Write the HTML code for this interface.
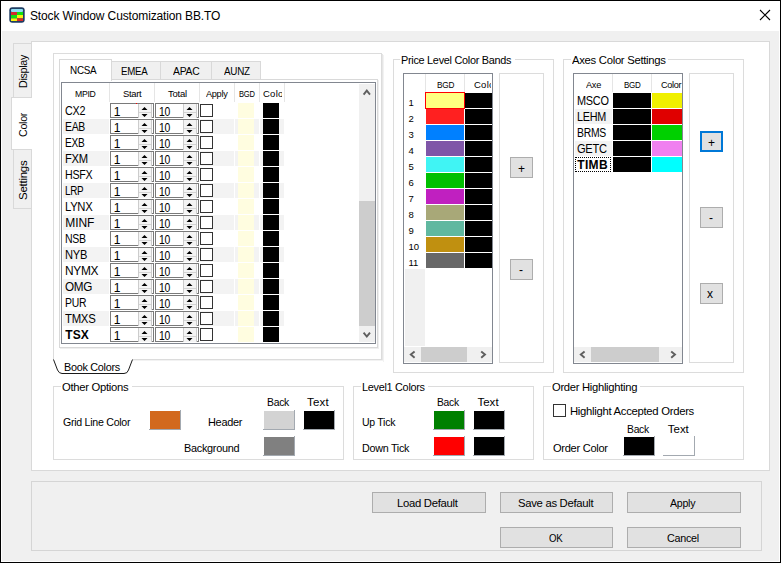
<!DOCTYPE html>
<html><head><meta charset="utf-8"><style>
html,body{margin:0;padding:0;width:781px;height:563px;overflow:hidden;background:#000}
body>div,body>svg{position:absolute}
body{position:relative;font-family:"Liberation Sans", sans-serif}
</style></head><body>
<div style="left:0px;top:0px;width:781px;height:563px;background:#000"></div>
<div style="left:1px;top:1px;width:779px;height:561px;background:#fff"></div>
<div style="left:2px;top:31px;width:777px;height:530px;background:#f0f0f0"></div>
<svg style="left:9px;top:7px" width="16" height="16" viewBox="0 0 16 16">
<rect x="0.3" y="0.3" width="15.4" height="15.4" rx="3" fill="#1f3d63"/>
<rect x="2" y="2" width="12" height="3" rx="1" fill="#8edcf2"/>
<rect x="2" y="5" width="6" height="3" fill="#d42a2a"/><rect x="8" y="5" width="6" height="3" fill="#10e010"/>
<rect x="2" y="8" width="6" height="3.4" fill="#10e010"/><rect x="8" y="8" width="6" height="3.4" fill="#f8f010"/>
<rect x="2" y="11.4" width="6" height="2.6" fill="#f8f010"/><rect x="8" y="11.4" width="6" height="2.6" fill="#d42a2a"/>
</svg>
<div style="font-size:12px;font-weight:400;color:#000;letter-spacing:-0.135px;line-height:14px;white-space:nowrap;left:30.00px;top:9px;">Stock Window Customization BB.TO</div>
<svg style="left:759px;top:9px" width="12" height="12" viewBox="0 0 12 12"><path d="M1 1L11 11M11 1L1 11" stroke="#000" stroke-width="1.1"/></svg>
<div style="left:31px;top:41px;width:739px;height:430px;background:#d9d9d9"></div>
<div style="left:32px;top:42px;width:737px;height:428px;background:#fff"></div>
<div style="left:13px;top:43px;width:18px;height:55px;background:#d9d9d9"></div>
<div style="left:14px;top:44px;width:17px;height:53px;background:#f0f0f0"></div>
<div style="left:13px;top:149px;width:18px;height:60px;background:#d9d9d9"></div>
<div style="left:14px;top:150px;width:17px;height:58px;background:#f0f0f0"></div>
<div style="left:11px;top:97px;width:21px;height:53px;background:#d9d9d9"></div>
<div style="left:12px;top:98px;width:20px;height:51px;background:#fff"></div>
<div style="font-size:11.5px;font-weight:400;color:#000;letter-spacing:-0.300px;line-height:12px;white-space:nowrap;left:17px;top:88px;transform:rotate(-90deg) scaleX(0.927);transform-origin:0 0;">Display</div>
<div style="font-size:11.5px;font-weight:400;color:#000;letter-spacing:-0.300px;line-height:12px;white-space:nowrap;left:17px;top:136.5px;transform:rotate(-90deg) scaleX(0.926);transform-origin:0 0;">Color</div>
<div style="font-size:11.5px;font-weight:400;color:#000;letter-spacing:-0.258px;line-height:12px;white-space:nowrap;left:17px;top:200px;transform:rotate(-90deg) scaleX(1.000);transform-origin:0 0;">Settings</div>
<div style="left:53px;top:53px;width:329px;height:1px;background:#dcdcdc"></div>
<div style="left:53px;top:359px;width:329px;height:1px;background:#dcdcdc"></div>
<div style="left:53px;top:53px;width:1px;height:307px;background:#dcdcdc"></div>
<div style="left:381px;top:53px;width:1px;height:307px;background:#dcdcdc"></div>
<div style="left:382px;top:54px;width:1px;height:307px;background:#e6e6e6"></div>
<div style="left:383px;top:55px;width:1px;height:307px;background:#f2f2f2"></div>
<div style="left:54px;top:360px;width:329px;height:1px;background:#f2f2f2"></div>
<div style="left:111px;top:61px;width:50px;height:19px;background:#d9d9d9"></div>
<div style="left:112px;top:62px;width:48px;height:18px;background:#f0f0f0"></div>
<div style="left:160px;top:61px;width:52px;height:19px;background:#d9d9d9"></div>
<div style="left:161px;top:62px;width:50px;height:18px;background:#f0f0f0"></div>
<div style="left:211px;top:61px;width:50px;height:19px;background:#d9d9d9"></div>
<div style="left:212px;top:62px;width:48px;height:18px;background:#f0f0f0"></div>
<div style="left:59px;top:79px;width:319px;height:1px;background:#d9d9d9"></div>
<div style="left:59px;top:347px;width:319px;height:1px;background:#d9d9d9"></div>
<div style="left:59px;top:79px;width:1px;height:269px;background:#d9d9d9"></div>
<div style="left:377px;top:79px;width:1px;height:269px;background:#d9d9d9"></div>
<div style="left:378px;top:80px;width:1px;height:269px;background:#efefef"></div>
<div style="left:60px;top:348px;width:319px;height:1px;background:#efefef"></div>
<div style="left:59px;top:59px;width:53px;height:22px;background:#d9d9d9"></div>
<div style="left:60px;top:60px;width:51px;height:21px;background:#fff"></div>
<div style="font-size:11.5px;font-weight:400;color:#000;letter-spacing:-0.300px;line-height:12px;white-space:nowrap;left:70.00px;top:64px;transform:scaleX(0.860);transform-origin:0 0;">NCSA</div>
<div style="font-size:11.5px;font-weight:400;color:#000;letter-spacing:-0.300px;line-height:12px;white-space:nowrap;left:121.00px;top:65px;transform:scaleX(0.843);transform-origin:0 0;">EMEA</div>
<div style="font-size:11.5px;font-weight:400;color:#000;letter-spacing:-0.300px;line-height:12px;white-space:nowrap;left:173.00px;top:65px;transform:scaleX(0.902);transform-origin:0 0;">APAC</div>
<div style="font-size:11.5px;font-weight:400;color:#000;letter-spacing:-0.300px;line-height:12px;white-space:nowrap;left:224.00px;top:65px;transform:scaleX(0.856);transform-origin:0 0;">AUNZ</div>
<div style="left:61px;top:82px;width:315px;height:1px;background:#828790"></div>
<div style="left:61px;top:343px;width:315px;height:1px;background:#828790"></div>
<div style="left:61px;top:82px;width:1px;height:262px;background:#828790"></div>
<div style="left:375px;top:82px;width:1px;height:262px;background:#828790"></div>
<div style="left:109px;top:83px;width:1px;height:19px;background:#e5e5e5"></div>
<div style="left:154px;top:83px;width:1px;height:19px;background:#e5e5e5"></div>
<div style="left:199px;top:83px;width:1px;height:19px;background:#e5e5e5"></div>
<div style="left:234px;top:83px;width:1px;height:19px;background:#e5e5e5"></div>
<div style="left:259px;top:83px;width:1px;height:19px;background:#e5e5e5"></div>
<div style="left:284px;top:83px;width:1px;height:19px;background:#e5e5e5"></div>
<div style="font-size:9.5px;font-weight:400;color:#000;letter-spacing:-0.300px;line-height:11px;white-space:nowrap;left:75.00px;top:88px;transform:scaleX(0.913);transform-origin:0 0;">MPID</div>
<div style="font-size:9.5px;font-weight:400;color:#000;letter-spacing:-0.300px;line-height:11px;white-space:nowrap;left:123.00px;top:88px;transform:scaleX(0.988);transform-origin:0 0;">Start</div>
<div style="font-size:9.5px;font-weight:400;color:#000;letter-spacing:-0.239px;line-height:11px;white-space:nowrap;left:168.00px;top:88px;">Total</div>
<div style="font-size:9.5px;font-weight:400;color:#000;letter-spacing:-0.300px;line-height:11px;white-space:nowrap;left:206.00px;top:88px;transform:scaleX(0.964);transform-origin:0 0;">Apply</div>
<div style="font-size:9.5px;font-weight:400;color:#000;letter-spacing:-0.300px;line-height:11px;white-space:nowrap;left:239.00px;top:88px;transform:scaleX(0.795);transform-origin:0 0;">BGD</div>
<div style="font-size:9.5px;font-weight:400;color:#000;letter-spacing:0.248px;line-height:11px;white-space:nowrap;left:263.00px;top:88px;width:19.00px;overflow:hidden;">Colo</div>
<div style="font-size:12px;font-weight:400;color:#000;letter-spacing:-0.300px;line-height:14px;white-space:nowrap;left:65.30px;top:104px;transform:scaleX(0.897);transform-origin:0 0;">CX2</div>
<div style="left:110px;top:103px;width:44px;height:1px;background:#7a7a7a"></div>
<div style="left:110px;top:117px;width:44px;height:1px;background:#7a7a7a"></div>
<div style="left:110px;top:103px;width:1px;height:15px;background:#7a7a7a"></div>
<div style="left:153px;top:103px;width:1px;height:15px;background:#7a7a7a"></div>
<div style="left:111px;top:104px;width:42px;height:13px;background:#fff"></div>
<div style="left:138px;top:104px;width:14px;height:14px;background:#f4f4f4"></div>
<div style="left:138px;top:104px;width:1px;height:14px;background:#cccccc"></div>
<div style="left:151px;top:104px;width:1px;height:14px;background:#cccccc"></div>
<div style="left:139px;top:112px;width:12px;height:1px;background:#d4d4d4"></div>
<svg style="left:138px;top:103px" width="14" height="15" viewBox="0 0 14 15"><path d="M3.5 7L6.5 4L9.5 7Z M3.5 11H9.5L6.5 14Z" fill="#000"/></svg>
<div style="font-size:12px;font-weight:400;color:#000;letter-spacing:0.000px;line-height:14px;white-space:nowrap;left:113.70px;top:105px;">1</div>
<div style="left:155px;top:103px;width:44px;height:1px;background:#7a7a7a"></div>
<div style="left:155px;top:117px;width:44px;height:1px;background:#7a7a7a"></div>
<div style="left:155px;top:103px;width:1px;height:15px;background:#7a7a7a"></div>
<div style="left:198px;top:103px;width:1px;height:15px;background:#7a7a7a"></div>
<div style="left:156px;top:104px;width:42px;height:13px;background:#fff"></div>
<div style="left:183px;top:104px;width:14px;height:14px;background:#f4f4f4"></div>
<div style="left:183px;top:104px;width:1px;height:14px;background:#cccccc"></div>
<div style="left:196px;top:104px;width:1px;height:14px;background:#cccccc"></div>
<div style="left:184px;top:112px;width:12px;height:1px;background:#d4d4d4"></div>
<svg style="left:183px;top:103px" width="14" height="15" viewBox="0 0 14 15"><path d="M3.5 7L6.5 4L9.5 7Z M3.5 11H9.5L6.5 14Z" fill="#000"/></svg>
<div style="font-size:12px;font-weight:400;color:#000;letter-spacing:-0.300px;line-height:14px;white-space:nowrap;left:158.70px;top:105px;transform:scaleX(0.867);transform-origin:0 0;">10</div>
<div style="left:200px;top:104px;width:13px;height:1px;background:#333"></div>
<div style="left:200px;top:116px;width:13px;height:1px;background:#333"></div>
<div style="left:200px;top:104px;width:1px;height:13px;background:#333"></div>
<div style="left:212px;top:104px;width:1px;height:13px;background:#333"></div>
<div style="left:201px;top:105px;width:11px;height:11px;background:#fff"></div>
<div style="left:238px;top:103px;width:16px;height:15px;background:#fffde0"></div>
<div style="left:263px;top:103px;width:16px;height:15px;background:#000"></div>
<div style="left:63px;top:119px;width:46px;height:15px;background:#f3f3f3"></div>
<div style="left:110px;top:119px;width:44px;height:15px;background:#f3f3f3"></div>
<div style="left:155px;top:119px;width:44px;height:15px;background:#f3f3f3"></div>
<div style="left:200px;top:119px;width:34px;height:15px;background:#f3f3f3"></div>
<div style="left:235px;top:119px;width:24px;height:15px;background:#f3f3f3"></div>
<div style="left:260px;top:119px;width:24px;height:15px;background:#f3f3f3"></div>
<div style="font-size:12px;font-weight:400;color:#000;letter-spacing:-0.300px;line-height:14px;white-space:nowrap;left:65.30px;top:120px;transform:scaleX(0.867);transform-origin:0 0;">EAB</div>
<div style="left:110px;top:119px;width:44px;height:1px;background:#7a7a7a"></div>
<div style="left:110px;top:133px;width:44px;height:1px;background:#7a7a7a"></div>
<div style="left:110px;top:119px;width:1px;height:15px;background:#7a7a7a"></div>
<div style="left:153px;top:119px;width:1px;height:15px;background:#7a7a7a"></div>
<div style="left:111px;top:120px;width:42px;height:13px;background:#fff"></div>
<div style="left:138px;top:120px;width:14px;height:14px;background:#f4f4f4"></div>
<div style="left:138px;top:120px;width:1px;height:14px;background:#cccccc"></div>
<div style="left:151px;top:120px;width:1px;height:14px;background:#cccccc"></div>
<div style="left:139px;top:128px;width:12px;height:1px;background:#d4d4d4"></div>
<svg style="left:138px;top:119px" width="14" height="15" viewBox="0 0 14 15"><path d="M3.5 7L6.5 4L9.5 7Z M3.5 11H9.5L6.5 14Z" fill="#000"/></svg>
<div style="font-size:12px;font-weight:400;color:#000;letter-spacing:0.000px;line-height:14px;white-space:nowrap;left:113.70px;top:121px;">1</div>
<div style="left:155px;top:119px;width:44px;height:1px;background:#7a7a7a"></div>
<div style="left:155px;top:133px;width:44px;height:1px;background:#7a7a7a"></div>
<div style="left:155px;top:119px;width:1px;height:15px;background:#7a7a7a"></div>
<div style="left:198px;top:119px;width:1px;height:15px;background:#7a7a7a"></div>
<div style="left:156px;top:120px;width:42px;height:13px;background:#fff"></div>
<div style="left:183px;top:120px;width:14px;height:14px;background:#f4f4f4"></div>
<div style="left:183px;top:120px;width:1px;height:14px;background:#cccccc"></div>
<div style="left:196px;top:120px;width:1px;height:14px;background:#cccccc"></div>
<div style="left:184px;top:128px;width:12px;height:1px;background:#d4d4d4"></div>
<svg style="left:183px;top:119px" width="14" height="15" viewBox="0 0 14 15"><path d="M3.5 7L6.5 4L9.5 7Z M3.5 11H9.5L6.5 14Z" fill="#000"/></svg>
<div style="font-size:12px;font-weight:400;color:#000;letter-spacing:-0.300px;line-height:14px;white-space:nowrap;left:158.70px;top:121px;transform:scaleX(0.867);transform-origin:0 0;">10</div>
<div style="left:200px;top:120px;width:13px;height:1px;background:#333"></div>
<div style="left:200px;top:132px;width:13px;height:1px;background:#333"></div>
<div style="left:200px;top:120px;width:1px;height:13px;background:#333"></div>
<div style="left:212px;top:120px;width:1px;height:13px;background:#333"></div>
<div style="left:201px;top:121px;width:11px;height:11px;background:#fff"></div>
<div style="left:238px;top:119px;width:16px;height:15px;background:#fffde0"></div>
<div style="left:263px;top:119px;width:16px;height:15px;background:#000"></div>
<div style="font-size:12px;font-weight:400;color:#000;letter-spacing:-0.300px;line-height:14px;white-space:nowrap;left:65.30px;top:136px;transform:scaleX(0.842);transform-origin:0 0;">EXB</div>
<div style="left:110px;top:135px;width:44px;height:1px;background:#7a7a7a"></div>
<div style="left:110px;top:149px;width:44px;height:1px;background:#7a7a7a"></div>
<div style="left:110px;top:135px;width:1px;height:15px;background:#7a7a7a"></div>
<div style="left:153px;top:135px;width:1px;height:15px;background:#7a7a7a"></div>
<div style="left:111px;top:136px;width:42px;height:13px;background:#fff"></div>
<div style="left:138px;top:136px;width:14px;height:14px;background:#f4f4f4"></div>
<div style="left:138px;top:136px;width:1px;height:14px;background:#cccccc"></div>
<div style="left:151px;top:136px;width:1px;height:14px;background:#cccccc"></div>
<div style="left:139px;top:144px;width:12px;height:1px;background:#d4d4d4"></div>
<svg style="left:138px;top:135px" width="14" height="15" viewBox="0 0 14 15"><path d="M3.5 7L6.5 4L9.5 7Z M3.5 11H9.5L6.5 14Z" fill="#000"/></svg>
<div style="font-size:12px;font-weight:400;color:#000;letter-spacing:0.000px;line-height:14px;white-space:nowrap;left:113.70px;top:137px;">1</div>
<div style="left:155px;top:135px;width:44px;height:1px;background:#7a7a7a"></div>
<div style="left:155px;top:149px;width:44px;height:1px;background:#7a7a7a"></div>
<div style="left:155px;top:135px;width:1px;height:15px;background:#7a7a7a"></div>
<div style="left:198px;top:135px;width:1px;height:15px;background:#7a7a7a"></div>
<div style="left:156px;top:136px;width:42px;height:13px;background:#fff"></div>
<div style="left:183px;top:136px;width:14px;height:14px;background:#f4f4f4"></div>
<div style="left:183px;top:136px;width:1px;height:14px;background:#cccccc"></div>
<div style="left:196px;top:136px;width:1px;height:14px;background:#cccccc"></div>
<div style="left:184px;top:144px;width:12px;height:1px;background:#d4d4d4"></div>
<svg style="left:183px;top:135px" width="14" height="15" viewBox="0 0 14 15"><path d="M3.5 7L6.5 4L9.5 7Z M3.5 11H9.5L6.5 14Z" fill="#000"/></svg>
<div style="font-size:12px;font-weight:400;color:#000;letter-spacing:-0.300px;line-height:14px;white-space:nowrap;left:158.70px;top:137px;transform:scaleX(0.867);transform-origin:0 0;">10</div>
<div style="left:200px;top:136px;width:13px;height:1px;background:#333"></div>
<div style="left:200px;top:148px;width:13px;height:1px;background:#333"></div>
<div style="left:200px;top:136px;width:1px;height:13px;background:#333"></div>
<div style="left:212px;top:136px;width:1px;height:13px;background:#333"></div>
<div style="left:201px;top:137px;width:11px;height:11px;background:#fff"></div>
<div style="left:238px;top:135px;width:16px;height:15px;background:#fffde0"></div>
<div style="left:263px;top:135px;width:16px;height:15px;background:#000"></div>
<div style="left:63px;top:151px;width:46px;height:15px;background:#f3f3f3"></div>
<div style="left:110px;top:151px;width:44px;height:15px;background:#f3f3f3"></div>
<div style="left:155px;top:151px;width:44px;height:15px;background:#f3f3f3"></div>
<div style="left:200px;top:151px;width:34px;height:15px;background:#f3f3f3"></div>
<div style="left:235px;top:151px;width:24px;height:15px;background:#f3f3f3"></div>
<div style="left:260px;top:151px;width:24px;height:15px;background:#f3f3f3"></div>
<div style="font-size:12px;font-weight:400;color:#000;letter-spacing:-0.300px;line-height:14px;white-space:nowrap;left:65.30px;top:152px;transform:scaleX(0.934);transform-origin:0 0;">FXM</div>
<div style="left:110px;top:151px;width:44px;height:1px;background:#7a7a7a"></div>
<div style="left:110px;top:165px;width:44px;height:1px;background:#7a7a7a"></div>
<div style="left:110px;top:151px;width:1px;height:15px;background:#7a7a7a"></div>
<div style="left:153px;top:151px;width:1px;height:15px;background:#7a7a7a"></div>
<div style="left:111px;top:152px;width:42px;height:13px;background:#fff"></div>
<div style="left:138px;top:152px;width:14px;height:14px;background:#f4f4f4"></div>
<div style="left:138px;top:152px;width:1px;height:14px;background:#cccccc"></div>
<div style="left:151px;top:152px;width:1px;height:14px;background:#cccccc"></div>
<div style="left:139px;top:160px;width:12px;height:1px;background:#d4d4d4"></div>
<svg style="left:138px;top:151px" width="14" height="15" viewBox="0 0 14 15"><path d="M3.5 7L6.5 4L9.5 7Z M3.5 11H9.5L6.5 14Z" fill="#000"/></svg>
<div style="font-size:12px;font-weight:400;color:#000;letter-spacing:0.000px;line-height:14px;white-space:nowrap;left:113.70px;top:153px;">1</div>
<div style="left:155px;top:151px;width:44px;height:1px;background:#7a7a7a"></div>
<div style="left:155px;top:165px;width:44px;height:1px;background:#7a7a7a"></div>
<div style="left:155px;top:151px;width:1px;height:15px;background:#7a7a7a"></div>
<div style="left:198px;top:151px;width:1px;height:15px;background:#7a7a7a"></div>
<div style="left:156px;top:152px;width:42px;height:13px;background:#fff"></div>
<div style="left:183px;top:152px;width:14px;height:14px;background:#f4f4f4"></div>
<div style="left:183px;top:152px;width:1px;height:14px;background:#cccccc"></div>
<div style="left:196px;top:152px;width:1px;height:14px;background:#cccccc"></div>
<div style="left:184px;top:160px;width:12px;height:1px;background:#d4d4d4"></div>
<svg style="left:183px;top:151px" width="14" height="15" viewBox="0 0 14 15"><path d="M3.5 7L6.5 4L9.5 7Z M3.5 11H9.5L6.5 14Z" fill="#000"/></svg>
<div style="font-size:12px;font-weight:400;color:#000;letter-spacing:-0.300px;line-height:14px;white-space:nowrap;left:158.70px;top:153px;transform:scaleX(0.867);transform-origin:0 0;">10</div>
<div style="left:200px;top:152px;width:13px;height:1px;background:#333"></div>
<div style="left:200px;top:164px;width:13px;height:1px;background:#333"></div>
<div style="left:200px;top:152px;width:1px;height:13px;background:#333"></div>
<div style="left:212px;top:152px;width:1px;height:13px;background:#333"></div>
<div style="left:201px;top:153px;width:11px;height:11px;background:#fff"></div>
<div style="left:238px;top:151px;width:16px;height:15px;background:#fffde0"></div>
<div style="left:263px;top:151px;width:16px;height:15px;background:#000"></div>
<div style="font-size:12px;font-weight:400;color:#000;letter-spacing:-0.300px;line-height:14px;white-space:nowrap;left:65.30px;top:168px;transform:scaleX(0.891);transform-origin:0 0;">HSFX</div>
<div style="left:110px;top:167px;width:44px;height:1px;background:#7a7a7a"></div>
<div style="left:110px;top:181px;width:44px;height:1px;background:#7a7a7a"></div>
<div style="left:110px;top:167px;width:1px;height:15px;background:#7a7a7a"></div>
<div style="left:153px;top:167px;width:1px;height:15px;background:#7a7a7a"></div>
<div style="left:111px;top:168px;width:42px;height:13px;background:#fff"></div>
<div style="left:138px;top:168px;width:14px;height:14px;background:#f4f4f4"></div>
<div style="left:138px;top:168px;width:1px;height:14px;background:#cccccc"></div>
<div style="left:151px;top:168px;width:1px;height:14px;background:#cccccc"></div>
<div style="left:139px;top:176px;width:12px;height:1px;background:#d4d4d4"></div>
<svg style="left:138px;top:167px" width="14" height="15" viewBox="0 0 14 15"><path d="M3.5 7L6.5 4L9.5 7Z M3.5 11H9.5L6.5 14Z" fill="#000"/></svg>
<div style="font-size:12px;font-weight:400;color:#000;letter-spacing:0.000px;line-height:14px;white-space:nowrap;left:113.70px;top:169px;">1</div>
<div style="left:155px;top:167px;width:44px;height:1px;background:#7a7a7a"></div>
<div style="left:155px;top:181px;width:44px;height:1px;background:#7a7a7a"></div>
<div style="left:155px;top:167px;width:1px;height:15px;background:#7a7a7a"></div>
<div style="left:198px;top:167px;width:1px;height:15px;background:#7a7a7a"></div>
<div style="left:156px;top:168px;width:42px;height:13px;background:#fff"></div>
<div style="left:183px;top:168px;width:14px;height:14px;background:#f4f4f4"></div>
<div style="left:183px;top:168px;width:1px;height:14px;background:#cccccc"></div>
<div style="left:196px;top:168px;width:1px;height:14px;background:#cccccc"></div>
<div style="left:184px;top:176px;width:12px;height:1px;background:#d4d4d4"></div>
<svg style="left:183px;top:167px" width="14" height="15" viewBox="0 0 14 15"><path d="M3.5 7L6.5 4L9.5 7Z M3.5 11H9.5L6.5 14Z" fill="#000"/></svg>
<div style="font-size:12px;font-weight:400;color:#000;letter-spacing:-0.300px;line-height:14px;white-space:nowrap;left:158.70px;top:169px;transform:scaleX(0.867);transform-origin:0 0;">10</div>
<div style="left:200px;top:168px;width:13px;height:1px;background:#333"></div>
<div style="left:200px;top:180px;width:13px;height:1px;background:#333"></div>
<div style="left:200px;top:168px;width:1px;height:13px;background:#333"></div>
<div style="left:212px;top:168px;width:1px;height:13px;background:#333"></div>
<div style="left:201px;top:169px;width:11px;height:11px;background:#fff"></div>
<div style="left:238px;top:167px;width:16px;height:15px;background:#fffde0"></div>
<div style="left:263px;top:167px;width:16px;height:15px;background:#000"></div>
<div style="left:63px;top:183px;width:46px;height:15px;background:#f3f3f3"></div>
<div style="left:110px;top:183px;width:44px;height:15px;background:#f3f3f3"></div>
<div style="left:155px;top:183px;width:44px;height:15px;background:#f3f3f3"></div>
<div style="left:200px;top:183px;width:34px;height:15px;background:#f3f3f3"></div>
<div style="left:235px;top:183px;width:24px;height:15px;background:#f3f3f3"></div>
<div style="left:260px;top:183px;width:24px;height:15px;background:#f3f3f3"></div>
<div style="font-size:12px;font-weight:400;color:#000;letter-spacing:-0.300px;line-height:14px;white-space:nowrap;left:65.30px;top:184px;transform:scaleX(0.822);transform-origin:0 0;">LRP</div>
<div style="left:110px;top:183px;width:44px;height:1px;background:#7a7a7a"></div>
<div style="left:110px;top:197px;width:44px;height:1px;background:#7a7a7a"></div>
<div style="left:110px;top:183px;width:1px;height:15px;background:#7a7a7a"></div>
<div style="left:153px;top:183px;width:1px;height:15px;background:#7a7a7a"></div>
<div style="left:111px;top:184px;width:42px;height:13px;background:#fff"></div>
<div style="left:138px;top:184px;width:14px;height:14px;background:#f4f4f4"></div>
<div style="left:138px;top:184px;width:1px;height:14px;background:#cccccc"></div>
<div style="left:151px;top:184px;width:1px;height:14px;background:#cccccc"></div>
<div style="left:139px;top:192px;width:12px;height:1px;background:#d4d4d4"></div>
<svg style="left:138px;top:183px" width="14" height="15" viewBox="0 0 14 15"><path d="M3.5 7L6.5 4L9.5 7Z M3.5 11H9.5L6.5 14Z" fill="#000"/></svg>
<div style="font-size:12px;font-weight:400;color:#000;letter-spacing:0.000px;line-height:14px;white-space:nowrap;left:113.70px;top:185px;">1</div>
<div style="left:155px;top:183px;width:44px;height:1px;background:#7a7a7a"></div>
<div style="left:155px;top:197px;width:44px;height:1px;background:#7a7a7a"></div>
<div style="left:155px;top:183px;width:1px;height:15px;background:#7a7a7a"></div>
<div style="left:198px;top:183px;width:1px;height:15px;background:#7a7a7a"></div>
<div style="left:156px;top:184px;width:42px;height:13px;background:#fff"></div>
<div style="left:183px;top:184px;width:14px;height:14px;background:#f4f4f4"></div>
<div style="left:183px;top:184px;width:1px;height:14px;background:#cccccc"></div>
<div style="left:196px;top:184px;width:1px;height:14px;background:#cccccc"></div>
<div style="left:184px;top:192px;width:12px;height:1px;background:#d4d4d4"></div>
<svg style="left:183px;top:183px" width="14" height="15" viewBox="0 0 14 15"><path d="M3.5 7L6.5 4L9.5 7Z M3.5 11H9.5L6.5 14Z" fill="#000"/></svg>
<div style="font-size:12px;font-weight:400;color:#000;letter-spacing:-0.300px;line-height:14px;white-space:nowrap;left:158.70px;top:185px;transform:scaleX(0.867);transform-origin:0 0;">10</div>
<div style="left:200px;top:184px;width:13px;height:1px;background:#333"></div>
<div style="left:200px;top:196px;width:13px;height:1px;background:#333"></div>
<div style="left:200px;top:184px;width:1px;height:13px;background:#333"></div>
<div style="left:212px;top:184px;width:1px;height:13px;background:#333"></div>
<div style="left:201px;top:185px;width:11px;height:11px;background:#fff"></div>
<div style="left:238px;top:183px;width:16px;height:15px;background:#fffde0"></div>
<div style="left:263px;top:183px;width:16px;height:15px;background:#000"></div>
<div style="font-size:12px;font-weight:400;color:#000;letter-spacing:-0.300px;line-height:14px;white-space:nowrap;left:65.30px;top:200px;transform:scaleX(0.937);transform-origin:0 0;">LYNX</div>
<div style="left:110px;top:199px;width:44px;height:1px;background:#7a7a7a"></div>
<div style="left:110px;top:213px;width:44px;height:1px;background:#7a7a7a"></div>
<div style="left:110px;top:199px;width:1px;height:15px;background:#7a7a7a"></div>
<div style="left:153px;top:199px;width:1px;height:15px;background:#7a7a7a"></div>
<div style="left:111px;top:200px;width:42px;height:13px;background:#fff"></div>
<div style="left:138px;top:200px;width:14px;height:14px;background:#f4f4f4"></div>
<div style="left:138px;top:200px;width:1px;height:14px;background:#cccccc"></div>
<div style="left:151px;top:200px;width:1px;height:14px;background:#cccccc"></div>
<div style="left:139px;top:208px;width:12px;height:1px;background:#d4d4d4"></div>
<svg style="left:138px;top:199px" width="14" height="15" viewBox="0 0 14 15"><path d="M3.5 7L6.5 4L9.5 7Z M3.5 11H9.5L6.5 14Z" fill="#000"/></svg>
<div style="font-size:12px;font-weight:400;color:#000;letter-spacing:0.000px;line-height:14px;white-space:nowrap;left:113.70px;top:201px;">1</div>
<div style="left:155px;top:199px;width:44px;height:1px;background:#7a7a7a"></div>
<div style="left:155px;top:213px;width:44px;height:1px;background:#7a7a7a"></div>
<div style="left:155px;top:199px;width:1px;height:15px;background:#7a7a7a"></div>
<div style="left:198px;top:199px;width:1px;height:15px;background:#7a7a7a"></div>
<div style="left:156px;top:200px;width:42px;height:13px;background:#fff"></div>
<div style="left:183px;top:200px;width:14px;height:14px;background:#f4f4f4"></div>
<div style="left:183px;top:200px;width:1px;height:14px;background:#cccccc"></div>
<div style="left:196px;top:200px;width:1px;height:14px;background:#cccccc"></div>
<div style="left:184px;top:208px;width:12px;height:1px;background:#d4d4d4"></div>
<svg style="left:183px;top:199px" width="14" height="15" viewBox="0 0 14 15"><path d="M3.5 7L6.5 4L9.5 7Z M3.5 11H9.5L6.5 14Z" fill="#000"/></svg>
<div style="font-size:12px;font-weight:400;color:#000;letter-spacing:-0.300px;line-height:14px;white-space:nowrap;left:158.70px;top:201px;transform:scaleX(0.867);transform-origin:0 0;">10</div>
<div style="left:200px;top:200px;width:13px;height:1px;background:#333"></div>
<div style="left:200px;top:212px;width:13px;height:1px;background:#333"></div>
<div style="left:200px;top:200px;width:1px;height:13px;background:#333"></div>
<div style="left:212px;top:200px;width:1px;height:13px;background:#333"></div>
<div style="left:201px;top:201px;width:11px;height:11px;background:#fff"></div>
<div style="left:238px;top:199px;width:16px;height:15px;background:#fffde0"></div>
<div style="left:263px;top:199px;width:16px;height:15px;background:#000"></div>
<div style="left:63px;top:215px;width:46px;height:15px;background:#f3f3f3"></div>
<div style="left:110px;top:215px;width:44px;height:15px;background:#f3f3f3"></div>
<div style="left:155px;top:215px;width:44px;height:15px;background:#f3f3f3"></div>
<div style="left:200px;top:215px;width:34px;height:15px;background:#f3f3f3"></div>
<div style="left:235px;top:215px;width:24px;height:15px;background:#f3f3f3"></div>
<div style="left:260px;top:215px;width:24px;height:15px;background:#f3f3f3"></div>
<div style="font-size:12px;font-weight:400;color:#000;letter-spacing:-0.099px;line-height:14px;white-space:nowrap;left:65.30px;top:216px;">MINF</div>
<div style="left:110px;top:215px;width:44px;height:1px;background:#7a7a7a"></div>
<div style="left:110px;top:229px;width:44px;height:1px;background:#7a7a7a"></div>
<div style="left:110px;top:215px;width:1px;height:15px;background:#7a7a7a"></div>
<div style="left:153px;top:215px;width:1px;height:15px;background:#7a7a7a"></div>
<div style="left:111px;top:216px;width:42px;height:13px;background:#fff"></div>
<div style="left:138px;top:216px;width:14px;height:14px;background:#f4f4f4"></div>
<div style="left:138px;top:216px;width:1px;height:14px;background:#cccccc"></div>
<div style="left:151px;top:216px;width:1px;height:14px;background:#cccccc"></div>
<div style="left:139px;top:224px;width:12px;height:1px;background:#d4d4d4"></div>
<svg style="left:138px;top:215px" width="14" height="15" viewBox="0 0 14 15"><path d="M3.5 7L6.5 4L9.5 7Z M3.5 11H9.5L6.5 14Z" fill="#000"/></svg>
<div style="font-size:12px;font-weight:400;color:#000;letter-spacing:0.000px;line-height:14px;white-space:nowrap;left:113.70px;top:217px;">1</div>
<div style="left:155px;top:215px;width:44px;height:1px;background:#7a7a7a"></div>
<div style="left:155px;top:229px;width:44px;height:1px;background:#7a7a7a"></div>
<div style="left:155px;top:215px;width:1px;height:15px;background:#7a7a7a"></div>
<div style="left:198px;top:215px;width:1px;height:15px;background:#7a7a7a"></div>
<div style="left:156px;top:216px;width:42px;height:13px;background:#fff"></div>
<div style="left:183px;top:216px;width:14px;height:14px;background:#f4f4f4"></div>
<div style="left:183px;top:216px;width:1px;height:14px;background:#cccccc"></div>
<div style="left:196px;top:216px;width:1px;height:14px;background:#cccccc"></div>
<div style="left:184px;top:224px;width:12px;height:1px;background:#d4d4d4"></div>
<svg style="left:183px;top:215px" width="14" height="15" viewBox="0 0 14 15"><path d="M3.5 7L6.5 4L9.5 7Z M3.5 11H9.5L6.5 14Z" fill="#000"/></svg>
<div style="font-size:12px;font-weight:400;color:#000;letter-spacing:-0.300px;line-height:14px;white-space:nowrap;left:158.70px;top:217px;transform:scaleX(0.867);transform-origin:0 0;">10</div>
<div style="left:200px;top:216px;width:13px;height:1px;background:#333"></div>
<div style="left:200px;top:228px;width:13px;height:1px;background:#333"></div>
<div style="left:200px;top:216px;width:1px;height:13px;background:#333"></div>
<div style="left:212px;top:216px;width:1px;height:13px;background:#333"></div>
<div style="left:201px;top:217px;width:11px;height:11px;background:#fff"></div>
<div style="left:238px;top:215px;width:16px;height:15px;background:#fffde0"></div>
<div style="left:263px;top:215px;width:16px;height:15px;background:#000"></div>
<div style="font-size:12px;font-weight:400;color:#000;letter-spacing:-0.300px;line-height:14px;white-space:nowrap;left:65.30px;top:232px;transform:scaleX(0.877);transform-origin:0 0;">NSB</div>
<div style="left:110px;top:231px;width:44px;height:1px;background:#7a7a7a"></div>
<div style="left:110px;top:245px;width:44px;height:1px;background:#7a7a7a"></div>
<div style="left:110px;top:231px;width:1px;height:15px;background:#7a7a7a"></div>
<div style="left:153px;top:231px;width:1px;height:15px;background:#7a7a7a"></div>
<div style="left:111px;top:232px;width:42px;height:13px;background:#fff"></div>
<div style="left:138px;top:232px;width:14px;height:14px;background:#f4f4f4"></div>
<div style="left:138px;top:232px;width:1px;height:14px;background:#cccccc"></div>
<div style="left:151px;top:232px;width:1px;height:14px;background:#cccccc"></div>
<div style="left:139px;top:240px;width:12px;height:1px;background:#d4d4d4"></div>
<svg style="left:138px;top:231px" width="14" height="15" viewBox="0 0 14 15"><path d="M3.5 7L6.5 4L9.5 7Z M3.5 11H9.5L6.5 14Z" fill="#000"/></svg>
<div style="font-size:12px;font-weight:400;color:#000;letter-spacing:0.000px;line-height:14px;white-space:nowrap;left:113.70px;top:233px;">1</div>
<div style="left:155px;top:231px;width:44px;height:1px;background:#7a7a7a"></div>
<div style="left:155px;top:245px;width:44px;height:1px;background:#7a7a7a"></div>
<div style="left:155px;top:231px;width:1px;height:15px;background:#7a7a7a"></div>
<div style="left:198px;top:231px;width:1px;height:15px;background:#7a7a7a"></div>
<div style="left:156px;top:232px;width:42px;height:13px;background:#fff"></div>
<div style="left:183px;top:232px;width:14px;height:14px;background:#f4f4f4"></div>
<div style="left:183px;top:232px;width:1px;height:14px;background:#cccccc"></div>
<div style="left:196px;top:232px;width:1px;height:14px;background:#cccccc"></div>
<div style="left:184px;top:240px;width:12px;height:1px;background:#d4d4d4"></div>
<svg style="left:183px;top:231px" width="14" height="15" viewBox="0 0 14 15"><path d="M3.5 7L6.5 4L9.5 7Z M3.5 11H9.5L6.5 14Z" fill="#000"/></svg>
<div style="font-size:12px;font-weight:400;color:#000;letter-spacing:-0.300px;line-height:14px;white-space:nowrap;left:158.70px;top:233px;transform:scaleX(0.867);transform-origin:0 0;">10</div>
<div style="left:200px;top:232px;width:13px;height:1px;background:#333"></div>
<div style="left:200px;top:244px;width:13px;height:1px;background:#333"></div>
<div style="left:200px;top:232px;width:1px;height:13px;background:#333"></div>
<div style="left:212px;top:232px;width:1px;height:13px;background:#333"></div>
<div style="left:201px;top:233px;width:11px;height:11px;background:#fff"></div>
<div style="left:238px;top:231px;width:16px;height:15px;background:#fffde0"></div>
<div style="left:263px;top:231px;width:16px;height:15px;background:#000"></div>
<div style="left:63px;top:247px;width:46px;height:15px;background:#f3f3f3"></div>
<div style="left:110px;top:247px;width:44px;height:15px;background:#f3f3f3"></div>
<div style="left:155px;top:247px;width:44px;height:15px;background:#f3f3f3"></div>
<div style="left:200px;top:247px;width:34px;height:15px;background:#f3f3f3"></div>
<div style="left:235px;top:247px;width:24px;height:15px;background:#f3f3f3"></div>
<div style="left:260px;top:247px;width:24px;height:15px;background:#f3f3f3"></div>
<div style="font-size:12px;font-weight:400;color:#000;letter-spacing:-0.300px;line-height:14px;white-space:nowrap;left:65.30px;top:248px;transform:scaleX(0.926);transform-origin:0 0;">NYB</div>
<div style="left:110px;top:247px;width:44px;height:1px;background:#7a7a7a"></div>
<div style="left:110px;top:261px;width:44px;height:1px;background:#7a7a7a"></div>
<div style="left:110px;top:247px;width:1px;height:15px;background:#7a7a7a"></div>
<div style="left:153px;top:247px;width:1px;height:15px;background:#7a7a7a"></div>
<div style="left:111px;top:248px;width:42px;height:13px;background:#fff"></div>
<div style="left:138px;top:248px;width:14px;height:14px;background:#f4f4f4"></div>
<div style="left:138px;top:248px;width:1px;height:14px;background:#cccccc"></div>
<div style="left:151px;top:248px;width:1px;height:14px;background:#cccccc"></div>
<div style="left:139px;top:256px;width:12px;height:1px;background:#d4d4d4"></div>
<svg style="left:138px;top:247px" width="14" height="15" viewBox="0 0 14 15"><path d="M3.5 7L6.5 4L9.5 7Z M3.5 11H9.5L6.5 14Z" fill="#000"/></svg>
<div style="font-size:12px;font-weight:400;color:#000;letter-spacing:0.000px;line-height:14px;white-space:nowrap;left:113.70px;top:249px;">1</div>
<div style="left:155px;top:247px;width:44px;height:1px;background:#7a7a7a"></div>
<div style="left:155px;top:261px;width:44px;height:1px;background:#7a7a7a"></div>
<div style="left:155px;top:247px;width:1px;height:15px;background:#7a7a7a"></div>
<div style="left:198px;top:247px;width:1px;height:15px;background:#7a7a7a"></div>
<div style="left:156px;top:248px;width:42px;height:13px;background:#fff"></div>
<div style="left:183px;top:248px;width:14px;height:14px;background:#f4f4f4"></div>
<div style="left:183px;top:248px;width:1px;height:14px;background:#cccccc"></div>
<div style="left:196px;top:248px;width:1px;height:14px;background:#cccccc"></div>
<div style="left:184px;top:256px;width:12px;height:1px;background:#d4d4d4"></div>
<svg style="left:183px;top:247px" width="14" height="15" viewBox="0 0 14 15"><path d="M3.5 7L6.5 4L9.5 7Z M3.5 11H9.5L6.5 14Z" fill="#000"/></svg>
<div style="font-size:12px;font-weight:400;color:#000;letter-spacing:-0.300px;line-height:14px;white-space:nowrap;left:158.70px;top:249px;transform:scaleX(0.867);transform-origin:0 0;">10</div>
<div style="left:200px;top:248px;width:13px;height:1px;background:#333"></div>
<div style="left:200px;top:260px;width:13px;height:1px;background:#333"></div>
<div style="left:200px;top:248px;width:1px;height:13px;background:#333"></div>
<div style="left:212px;top:248px;width:1px;height:13px;background:#333"></div>
<div style="left:201px;top:249px;width:11px;height:11px;background:#fff"></div>
<div style="left:238px;top:247px;width:16px;height:15px;background:#fffde0"></div>
<div style="left:263px;top:247px;width:16px;height:15px;background:#000"></div>
<div style="font-size:12px;font-weight:400;color:#000;letter-spacing:-0.300px;line-height:14px;white-space:nowrap;left:65.30px;top:264px;transform:scaleX(0.992);transform-origin:0 0;">NYMX</div>
<div style="left:110px;top:263px;width:44px;height:1px;background:#7a7a7a"></div>
<div style="left:110px;top:277px;width:44px;height:1px;background:#7a7a7a"></div>
<div style="left:110px;top:263px;width:1px;height:15px;background:#7a7a7a"></div>
<div style="left:153px;top:263px;width:1px;height:15px;background:#7a7a7a"></div>
<div style="left:111px;top:264px;width:42px;height:13px;background:#fff"></div>
<div style="left:138px;top:264px;width:14px;height:14px;background:#f4f4f4"></div>
<div style="left:138px;top:264px;width:1px;height:14px;background:#cccccc"></div>
<div style="left:151px;top:264px;width:1px;height:14px;background:#cccccc"></div>
<div style="left:139px;top:272px;width:12px;height:1px;background:#d4d4d4"></div>
<svg style="left:138px;top:263px" width="14" height="15" viewBox="0 0 14 15"><path d="M3.5 7L6.5 4L9.5 7Z M3.5 11H9.5L6.5 14Z" fill="#000"/></svg>
<div style="font-size:12px;font-weight:400;color:#000;letter-spacing:0.000px;line-height:14px;white-space:nowrap;left:113.70px;top:265px;">1</div>
<div style="left:155px;top:263px;width:44px;height:1px;background:#7a7a7a"></div>
<div style="left:155px;top:277px;width:44px;height:1px;background:#7a7a7a"></div>
<div style="left:155px;top:263px;width:1px;height:15px;background:#7a7a7a"></div>
<div style="left:198px;top:263px;width:1px;height:15px;background:#7a7a7a"></div>
<div style="left:156px;top:264px;width:42px;height:13px;background:#fff"></div>
<div style="left:183px;top:264px;width:14px;height:14px;background:#f4f4f4"></div>
<div style="left:183px;top:264px;width:1px;height:14px;background:#cccccc"></div>
<div style="left:196px;top:264px;width:1px;height:14px;background:#cccccc"></div>
<div style="left:184px;top:272px;width:12px;height:1px;background:#d4d4d4"></div>
<svg style="left:183px;top:263px" width="14" height="15" viewBox="0 0 14 15"><path d="M3.5 7L6.5 4L9.5 7Z M3.5 11H9.5L6.5 14Z" fill="#000"/></svg>
<div style="font-size:12px;font-weight:400;color:#000;letter-spacing:-0.300px;line-height:14px;white-space:nowrap;left:158.70px;top:265px;transform:scaleX(0.867);transform-origin:0 0;">10</div>
<div style="left:200px;top:264px;width:13px;height:1px;background:#333"></div>
<div style="left:200px;top:276px;width:13px;height:1px;background:#333"></div>
<div style="left:200px;top:264px;width:1px;height:13px;background:#333"></div>
<div style="left:212px;top:264px;width:1px;height:13px;background:#333"></div>
<div style="left:201px;top:265px;width:11px;height:11px;background:#fff"></div>
<div style="left:238px;top:263px;width:16px;height:15px;background:#fffde0"></div>
<div style="left:263px;top:263px;width:16px;height:15px;background:#000"></div>
<div style="left:63px;top:279px;width:46px;height:15px;background:#f3f3f3"></div>
<div style="left:110px;top:279px;width:44px;height:15px;background:#f3f3f3"></div>
<div style="left:155px;top:279px;width:44px;height:15px;background:#f3f3f3"></div>
<div style="left:200px;top:279px;width:34px;height:15px;background:#f3f3f3"></div>
<div style="left:235px;top:279px;width:24px;height:15px;background:#f3f3f3"></div>
<div style="left:260px;top:279px;width:24px;height:15px;background:#f3f3f3"></div>
<div style="font-size:12px;font-weight:400;color:#000;letter-spacing:-0.300px;line-height:14px;white-space:nowrap;left:65.30px;top:280px;transform:scaleX(0.977);transform-origin:0 0;">OMG</div>
<div style="left:110px;top:279px;width:44px;height:1px;background:#7a7a7a"></div>
<div style="left:110px;top:293px;width:44px;height:1px;background:#7a7a7a"></div>
<div style="left:110px;top:279px;width:1px;height:15px;background:#7a7a7a"></div>
<div style="left:153px;top:279px;width:1px;height:15px;background:#7a7a7a"></div>
<div style="left:111px;top:280px;width:42px;height:13px;background:#fff"></div>
<div style="left:138px;top:280px;width:14px;height:14px;background:#f4f4f4"></div>
<div style="left:138px;top:280px;width:1px;height:14px;background:#cccccc"></div>
<div style="left:151px;top:280px;width:1px;height:14px;background:#cccccc"></div>
<div style="left:139px;top:288px;width:12px;height:1px;background:#d4d4d4"></div>
<svg style="left:138px;top:279px" width="14" height="15" viewBox="0 0 14 15"><path d="M3.5 7L6.5 4L9.5 7Z M3.5 11H9.5L6.5 14Z" fill="#000"/></svg>
<div style="font-size:12px;font-weight:400;color:#000;letter-spacing:0.000px;line-height:14px;white-space:nowrap;left:113.70px;top:281px;">1</div>
<div style="left:155px;top:279px;width:44px;height:1px;background:#7a7a7a"></div>
<div style="left:155px;top:293px;width:44px;height:1px;background:#7a7a7a"></div>
<div style="left:155px;top:279px;width:1px;height:15px;background:#7a7a7a"></div>
<div style="left:198px;top:279px;width:1px;height:15px;background:#7a7a7a"></div>
<div style="left:156px;top:280px;width:42px;height:13px;background:#fff"></div>
<div style="left:183px;top:280px;width:14px;height:14px;background:#f4f4f4"></div>
<div style="left:183px;top:280px;width:1px;height:14px;background:#cccccc"></div>
<div style="left:196px;top:280px;width:1px;height:14px;background:#cccccc"></div>
<div style="left:184px;top:288px;width:12px;height:1px;background:#d4d4d4"></div>
<svg style="left:183px;top:279px" width="14" height="15" viewBox="0 0 14 15"><path d="M3.5 7L6.5 4L9.5 7Z M3.5 11H9.5L6.5 14Z" fill="#000"/></svg>
<div style="font-size:12px;font-weight:400;color:#000;letter-spacing:-0.300px;line-height:14px;white-space:nowrap;left:158.70px;top:281px;transform:scaleX(0.867);transform-origin:0 0;">10</div>
<div style="left:200px;top:280px;width:13px;height:1px;background:#333"></div>
<div style="left:200px;top:292px;width:13px;height:1px;background:#333"></div>
<div style="left:200px;top:280px;width:1px;height:13px;background:#333"></div>
<div style="left:212px;top:280px;width:1px;height:13px;background:#333"></div>
<div style="left:201px;top:281px;width:11px;height:11px;background:#fff"></div>
<div style="left:238px;top:279px;width:16px;height:15px;background:#fffde0"></div>
<div style="left:263px;top:279px;width:16px;height:15px;background:#000"></div>
<div style="font-size:12px;font-weight:400;color:#000;letter-spacing:-0.300px;line-height:14px;white-space:nowrap;left:65.30px;top:296px;transform:scaleX(0.866);transform-origin:0 0;">PUR</div>
<div style="left:110px;top:295px;width:44px;height:1px;background:#7a7a7a"></div>
<div style="left:110px;top:309px;width:44px;height:1px;background:#7a7a7a"></div>
<div style="left:110px;top:295px;width:1px;height:15px;background:#7a7a7a"></div>
<div style="left:153px;top:295px;width:1px;height:15px;background:#7a7a7a"></div>
<div style="left:111px;top:296px;width:42px;height:13px;background:#fff"></div>
<div style="left:138px;top:296px;width:14px;height:14px;background:#f4f4f4"></div>
<div style="left:138px;top:296px;width:1px;height:14px;background:#cccccc"></div>
<div style="left:151px;top:296px;width:1px;height:14px;background:#cccccc"></div>
<div style="left:139px;top:304px;width:12px;height:1px;background:#d4d4d4"></div>
<svg style="left:138px;top:295px" width="14" height="15" viewBox="0 0 14 15"><path d="M3.5 7L6.5 4L9.5 7Z M3.5 11H9.5L6.5 14Z" fill="#000"/></svg>
<div style="font-size:12px;font-weight:400;color:#000;letter-spacing:0.000px;line-height:14px;white-space:nowrap;left:113.70px;top:297px;">1</div>
<div style="left:155px;top:295px;width:44px;height:1px;background:#7a7a7a"></div>
<div style="left:155px;top:309px;width:44px;height:1px;background:#7a7a7a"></div>
<div style="left:155px;top:295px;width:1px;height:15px;background:#7a7a7a"></div>
<div style="left:198px;top:295px;width:1px;height:15px;background:#7a7a7a"></div>
<div style="left:156px;top:296px;width:42px;height:13px;background:#fff"></div>
<div style="left:183px;top:296px;width:14px;height:14px;background:#f4f4f4"></div>
<div style="left:183px;top:296px;width:1px;height:14px;background:#cccccc"></div>
<div style="left:196px;top:296px;width:1px;height:14px;background:#cccccc"></div>
<div style="left:184px;top:304px;width:12px;height:1px;background:#d4d4d4"></div>
<svg style="left:183px;top:295px" width="14" height="15" viewBox="0 0 14 15"><path d="M3.5 7L6.5 4L9.5 7Z M3.5 11H9.5L6.5 14Z" fill="#000"/></svg>
<div style="font-size:12px;font-weight:400;color:#000;letter-spacing:-0.300px;line-height:14px;white-space:nowrap;left:158.70px;top:297px;transform:scaleX(0.867);transform-origin:0 0;">10</div>
<div style="left:200px;top:296px;width:13px;height:1px;background:#333"></div>
<div style="left:200px;top:308px;width:13px;height:1px;background:#333"></div>
<div style="left:200px;top:296px;width:1px;height:13px;background:#333"></div>
<div style="left:212px;top:296px;width:1px;height:13px;background:#333"></div>
<div style="left:201px;top:297px;width:11px;height:11px;background:#fff"></div>
<div style="left:238px;top:295px;width:16px;height:15px;background:#fffde0"></div>
<div style="left:263px;top:295px;width:16px;height:15px;background:#000"></div>
<div style="left:63px;top:311px;width:46px;height:15px;background:#f3f3f3"></div>
<div style="left:110px;top:311px;width:44px;height:15px;background:#f3f3f3"></div>
<div style="left:155px;top:311px;width:44px;height:15px;background:#f3f3f3"></div>
<div style="left:200px;top:311px;width:34px;height:15px;background:#f3f3f3"></div>
<div style="left:235px;top:311px;width:24px;height:15px;background:#f3f3f3"></div>
<div style="left:260px;top:311px;width:24px;height:15px;background:#f3f3f3"></div>
<div style="font-size:12px;font-weight:400;color:#000;letter-spacing:-0.300px;line-height:14px;white-space:nowrap;left:65.30px;top:312px;transform:scaleX(0.947);transform-origin:0 0;">TMXS</div>
<div style="left:110px;top:311px;width:44px;height:1px;background:#7a7a7a"></div>
<div style="left:110px;top:325px;width:44px;height:1px;background:#7a7a7a"></div>
<div style="left:110px;top:311px;width:1px;height:15px;background:#7a7a7a"></div>
<div style="left:153px;top:311px;width:1px;height:15px;background:#7a7a7a"></div>
<div style="left:111px;top:312px;width:42px;height:13px;background:#fff"></div>
<div style="left:138px;top:312px;width:14px;height:14px;background:#f4f4f4"></div>
<div style="left:138px;top:312px;width:1px;height:14px;background:#cccccc"></div>
<div style="left:151px;top:312px;width:1px;height:14px;background:#cccccc"></div>
<div style="left:139px;top:320px;width:12px;height:1px;background:#d4d4d4"></div>
<svg style="left:138px;top:311px" width="14" height="15" viewBox="0 0 14 15"><path d="M3.5 7L6.5 4L9.5 7Z M3.5 11H9.5L6.5 14Z" fill="#000"/></svg>
<div style="font-size:12px;font-weight:400;color:#000;letter-spacing:0.000px;line-height:14px;white-space:nowrap;left:113.70px;top:313px;">1</div>
<div style="left:155px;top:311px;width:44px;height:1px;background:#7a7a7a"></div>
<div style="left:155px;top:325px;width:44px;height:1px;background:#7a7a7a"></div>
<div style="left:155px;top:311px;width:1px;height:15px;background:#7a7a7a"></div>
<div style="left:198px;top:311px;width:1px;height:15px;background:#7a7a7a"></div>
<div style="left:156px;top:312px;width:42px;height:13px;background:#fff"></div>
<div style="left:183px;top:312px;width:14px;height:14px;background:#f4f4f4"></div>
<div style="left:183px;top:312px;width:1px;height:14px;background:#cccccc"></div>
<div style="left:196px;top:312px;width:1px;height:14px;background:#cccccc"></div>
<div style="left:184px;top:320px;width:12px;height:1px;background:#d4d4d4"></div>
<svg style="left:183px;top:311px" width="14" height="15" viewBox="0 0 14 15"><path d="M3.5 7L6.5 4L9.5 7Z M3.5 11H9.5L6.5 14Z" fill="#000"/></svg>
<div style="font-size:12px;font-weight:400;color:#000;letter-spacing:-0.300px;line-height:14px;white-space:nowrap;left:158.70px;top:313px;transform:scaleX(0.867);transform-origin:0 0;">10</div>
<div style="left:200px;top:312px;width:13px;height:1px;background:#333"></div>
<div style="left:200px;top:324px;width:13px;height:1px;background:#333"></div>
<div style="left:200px;top:312px;width:1px;height:13px;background:#333"></div>
<div style="left:212px;top:312px;width:1px;height:13px;background:#333"></div>
<div style="left:201px;top:313px;width:11px;height:11px;background:#fff"></div>
<div style="left:238px;top:311px;width:16px;height:15px;background:#fffde0"></div>
<div style="left:263px;top:311px;width:16px;height:15px;background:#000"></div>
<div style="font-size:12px;font-weight:700;color:#000;letter-spacing:0.083px;line-height:14px;white-space:nowrap;left:65.30px;top:328px;">TSX</div>
<div style="left:110px;top:327px;width:44px;height:1px;background:#7a7a7a"></div>
<div style="left:110px;top:341px;width:44px;height:1px;background:#7a7a7a"></div>
<div style="left:110px;top:327px;width:1px;height:15px;background:#7a7a7a"></div>
<div style="left:153px;top:327px;width:1px;height:15px;background:#7a7a7a"></div>
<div style="left:111px;top:328px;width:42px;height:13px;background:#fff"></div>
<div style="left:138px;top:328px;width:14px;height:14px;background:#f4f4f4"></div>
<div style="left:138px;top:328px;width:1px;height:14px;background:#cccccc"></div>
<div style="left:151px;top:328px;width:1px;height:14px;background:#cccccc"></div>
<div style="left:139px;top:336px;width:12px;height:1px;background:#d4d4d4"></div>
<svg style="left:138px;top:327px" width="14" height="15" viewBox="0 0 14 15"><path d="M3.5 7L6.5 4L9.5 7Z M3.5 11H9.5L6.5 14Z" fill="#000"/></svg>
<div style="font-size:12px;font-weight:400;color:#000;letter-spacing:0.000px;line-height:14px;white-space:nowrap;left:113.70px;top:329px;">1</div>
<div style="left:155px;top:327px;width:44px;height:1px;background:#7a7a7a"></div>
<div style="left:155px;top:341px;width:44px;height:1px;background:#7a7a7a"></div>
<div style="left:155px;top:327px;width:1px;height:15px;background:#7a7a7a"></div>
<div style="left:198px;top:327px;width:1px;height:15px;background:#7a7a7a"></div>
<div style="left:156px;top:328px;width:42px;height:13px;background:#fff"></div>
<div style="left:183px;top:328px;width:14px;height:14px;background:#f4f4f4"></div>
<div style="left:183px;top:328px;width:1px;height:14px;background:#cccccc"></div>
<div style="left:196px;top:328px;width:1px;height:14px;background:#cccccc"></div>
<div style="left:184px;top:336px;width:12px;height:1px;background:#d4d4d4"></div>
<svg style="left:183px;top:327px" width="14" height="15" viewBox="0 0 14 15"><path d="M3.5 7L6.5 4L9.5 7Z M3.5 11H9.5L6.5 14Z" fill="#000"/></svg>
<div style="font-size:12px;font-weight:400;color:#000;letter-spacing:-0.300px;line-height:14px;white-space:nowrap;left:158.70px;top:329px;transform:scaleX(0.867);transform-origin:0 0;">10</div>
<div style="left:200px;top:328px;width:13px;height:1px;background:#333"></div>
<div style="left:200px;top:340px;width:13px;height:1px;background:#333"></div>
<div style="left:200px;top:328px;width:1px;height:13px;background:#333"></div>
<div style="left:212px;top:328px;width:1px;height:13px;background:#333"></div>
<div style="left:201px;top:329px;width:11px;height:11px;background:#fff"></div>
<div style="left:238px;top:327px;width:16px;height:15px;background:#fffde0"></div>
<div style="left:263px;top:327px;width:16px;height:15px;background:#000"></div>
<div style="left:136px;top:103px;width:1px;height:1px;background:#ff0000"></div>
<div style="left:359px;top:84px;width:16px;height:258px;background:#f0f0f0"></div>
<div style="left:359px;top:201px;width:16px;height:125px;background:#cdcdcd"></div>
<svg style="left:0px;top:0px" width="781" height="563" viewBox="0 0 781 563"><path d="M363.6 94.6 L366.8 90.6 L370 94.6" stroke="#5f5f5f" stroke-width="1.9" fill="none"/></svg>
<svg style="left:0px;top:0px" width="781" height="563" viewBox="0 0 781 563"><path d="M363.6 332.6 L366.8 336.6 L370 332.6" stroke="#5f5f5f" stroke-width="1.9" fill="none"/></svg>
<div style="left:54px;top:359px;width:79px;height:2px;background:#fff"></div>
<svg style="left:50px;top:355px" width="90" height="22" viewBox="50 355 90 22">
<path d="M53.5 359.5 L57.5 370 Q59 373.5 62 373.5 L124 373.5 Q127.5 373.5 128.5 370 L132.5 359.5" fill="#fff" stroke="#1a1a1a" stroke-width="1"/>
</svg>
<div style="font-size:11.5px;font-weight:400;color:#000;letter-spacing:-0.300px;line-height:12px;white-space:nowrap;left:64.00px;top:361px;transform:scaleX(0.943);transform-origin:0 0;">Book Colors</div>
<div style="left:393px;top:59px;width:161px;height:1px;background:#dcdcdc"></div>
<div style="left:393px;top:372px;width:161px;height:1px;background:#dcdcdc"></div>
<div style="left:393px;top:59px;width:1px;height:314px;background:#dcdcdc"></div>
<div style="left:553px;top:59px;width:1px;height:314px;background:#dcdcdc"></div>
<div style="left:400px;top:55px;width:115px;height:5px;background:#fff"></div>
<div style="font-size:11.5px;font-weight:400;color:#000;letter-spacing:-0.300px;line-height:12px;white-space:nowrap;left:401.30px;top:54px;transform:scaleX(0.946);transform-origin:0 0;">Price Level Color Bands</div>
<div style="left:403px;top:73px;width:90px;height:1px;background:#828790"></div>
<div style="left:403px;top:363px;width:90px;height:1px;background:#828790"></div>
<div style="left:403px;top:73px;width:1px;height:291px;background:#828790"></div>
<div style="left:492px;top:73px;width:1px;height:291px;background:#828790"></div>
<div style="left:425px;top:74px;width:1px;height:18px;background:#e5e5e5"></div>
<div style="left:464px;top:74px;width:1px;height:18px;background:#e5e5e5"></div>
<div style="font-size:9.5px;font-weight:400;color:#000;letter-spacing:-0.300px;line-height:11px;white-space:nowrap;left:437.00px;top:79px;transform:scaleX(0.870);transform-origin:0 0;">BGD</div>
<div style="font-size:9.5px;font-weight:400;color:#000;letter-spacing:0.248px;line-height:11px;white-space:nowrap;left:474.00px;top:79px;width:17.00px;overflow:hidden;">Colo</div>
<div style="left:426px;top:93px;width:38px;height:15px;background:#ffff80"></div>
<div style="left:465px;top:93px;width:27px;height:15px;background:#000"></div>
<div style="font-size:9.5px;font-weight:400;color:#000;letter-spacing:0.000px;line-height:11px;white-space:nowrap;left:408.50px;top:97px;">1</div>
<div style="left:426px;top:109px;width:38px;height:15px;background:#ff2020"></div>
<div style="left:465px;top:109px;width:27px;height:15px;background:#000"></div>
<div style="font-size:9.5px;font-weight:400;color:#000;letter-spacing:0.000px;line-height:11px;white-space:nowrap;left:408.50px;top:113px;">2</div>
<div style="left:426px;top:125px;width:38px;height:15px;background:#0080ff"></div>
<div style="left:465px;top:125px;width:27px;height:15px;background:#000"></div>
<div style="font-size:9.5px;font-weight:400;color:#000;letter-spacing:0.000px;line-height:11px;white-space:nowrap;left:408.50px;top:129px;">3</div>
<div style="left:426px;top:141px;width:38px;height:15px;background:#7f56a8"></div>
<div style="left:465px;top:141px;width:27px;height:15px;background:#000"></div>
<div style="font-size:9.5px;font-weight:400;color:#000;letter-spacing:0.000px;line-height:11px;white-space:nowrap;left:408.50px;top:145px;">4</div>
<div style="left:426px;top:157px;width:38px;height:15px;background:#40f4f4"></div>
<div style="left:465px;top:157px;width:27px;height:15px;background:#000"></div>
<div style="font-size:9.5px;font-weight:400;color:#000;letter-spacing:0.000px;line-height:11px;white-space:nowrap;left:408.50px;top:161px;">5</div>
<div style="left:426px;top:173px;width:38px;height:15px;background:#00c000"></div>
<div style="left:465px;top:173px;width:27px;height:15px;background:#000"></div>
<div style="font-size:9.5px;font-weight:400;color:#000;letter-spacing:0.000px;line-height:11px;white-space:nowrap;left:408.50px;top:177px;">6</div>
<div style="left:426px;top:189px;width:38px;height:15px;background:#c020c0"></div>
<div style="left:465px;top:189px;width:27px;height:15px;background:#000"></div>
<div style="font-size:9.5px;font-weight:400;color:#000;letter-spacing:0.000px;line-height:11px;white-space:nowrap;left:408.50px;top:193px;">7</div>
<div style="left:426px;top:205px;width:38px;height:15px;background:#a8a878"></div>
<div style="left:465px;top:205px;width:27px;height:15px;background:#000"></div>
<div style="font-size:9.5px;font-weight:400;color:#000;letter-spacing:0.000px;line-height:11px;white-space:nowrap;left:408.50px;top:209px;">8</div>
<div style="left:426px;top:221px;width:38px;height:15px;background:#60b8a0"></div>
<div style="left:465px;top:221px;width:27px;height:15px;background:#000"></div>
<div style="font-size:9.5px;font-weight:400;color:#000;letter-spacing:0.000px;line-height:11px;white-space:nowrap;left:408.50px;top:225px;">9</div>
<div style="left:426px;top:237px;width:38px;height:15px;background:#c09010"></div>
<div style="left:465px;top:237px;width:27px;height:15px;background:#000"></div>
<div style="font-size:9.5px;font-weight:400;color:#000;letter-spacing:0.000px;line-height:11px;white-space:nowrap;left:408.50px;top:241px;">10</div>
<div style="left:426px;top:253px;width:38px;height:15px;background:#686868"></div>
<div style="left:465px;top:253px;width:27px;height:15px;background:#000"></div>
<div style="font-size:9.5px;font-weight:400;color:#000;letter-spacing:0.000px;line-height:11px;white-space:nowrap;left:408.50px;top:257px;">11</div>
<div style="left:425px;top:92px;width:40px;height:1px;background:#ff0000"></div>
<div style="left:425px;top:108px;width:40px;height:1px;background:#ff0000"></div>
<div style="left:425px;top:92px;width:1px;height:17px;background:#ff0000"></div>
<div style="left:464px;top:92px;width:1px;height:17px;background:#ff0000"></div>
<div style="left:405px;top:269px;width:20px;height:77px;background:#f0f0f0"></div>
<div style="left:404px;top:347px;width:88px;height:15px;background:#f0f0f0"></div>
<div style="left:421px;top:347px;width:46px;height:15px;background:#cdcdcd"></div>
<svg style="left:0px;top:0px" width="781" height="563" viewBox="0 0 781 563"><path d="M414.6 351.4 L410.8 354.6 L414.6 357.8" stroke="#5f5f5f" stroke-width="1.9" fill="none"/></svg>
<svg style="left:0px;top:0px" width="781" height="563" viewBox="0 0 781 563"><path d="M481.2 351.4 L485 354.6 L481.2 357.8" stroke="#5f5f5f" stroke-width="1.9" fill="none"/></svg>
<div style="left:499px;top:73px;width:45px;height:1px;background:#dcdcdc"></div>
<div style="left:499px;top:362px;width:45px;height:1px;background:#dcdcdc"></div>
<div style="left:499px;top:73px;width:1px;height:290px;background:#dcdcdc"></div>
<div style="left:543px;top:73px;width:1px;height:290px;background:#dcdcdc"></div>
<div style="left:510px;top:157px;width:23px;height:1px;background:#adadad"></div>
<div style="left:510px;top:177px;width:23px;height:1px;background:#adadad"></div>
<div style="left:510px;top:157px;width:1px;height:21px;background:#adadad"></div>
<div style="left:532px;top:157px;width:1px;height:21px;background:#adadad"></div>
<div style="left:511px;top:158px;width:21px;height:19px;background:#e1e1e1"></div>
<div style="font-size:12px;font-weight:400;color:#000;letter-spacing:0.000px;line-height:14px;white-space:nowrap;left:518.00px;top:162px;">+</div>
<div style="left:510px;top:259px;width:23px;height:1px;background:#adadad"></div>
<div style="left:510px;top:279px;width:23px;height:1px;background:#adadad"></div>
<div style="left:510px;top:259px;width:1px;height:21px;background:#adadad"></div>
<div style="left:532px;top:259px;width:1px;height:21px;background:#adadad"></div>
<div style="left:511px;top:260px;width:21px;height:19px;background:#e1e1e1"></div>
<div style="font-size:12px;font-weight:400;color:#000;letter-spacing:0.000px;line-height:14px;white-space:nowrap;left:519.00px;top:263px;">-</div>
<div style="left:563px;top:59px;width:181px;height:1px;background:#dcdcdc"></div>
<div style="left:563px;top:372px;width:181px;height:1px;background:#dcdcdc"></div>
<div style="left:563px;top:59px;width:1px;height:314px;background:#dcdcdc"></div>
<div style="left:743px;top:59px;width:1px;height:314px;background:#dcdcdc"></div>
<div style="left:571px;top:55px;width:97px;height:5px;background:#fff"></div>
<div style="font-size:11.5px;font-weight:400;color:#000;letter-spacing:-0.300px;line-height:12px;white-space:nowrap;left:571.50px;top:54px;transform:scaleX(0.983);transform-origin:0 0;">Axes Color Settings</div>
<div style="left:573px;top:73px;width:110px;height:1px;background:#828790"></div>
<div style="left:573px;top:363px;width:110px;height:1px;background:#828790"></div>
<div style="left:573px;top:73px;width:1px;height:291px;background:#828790"></div>
<div style="left:682px;top:73px;width:1px;height:291px;background:#828790"></div>
<div style="left:612px;top:74px;width:1px;height:18px;background:#e5e5e5"></div>
<div style="left:651px;top:74px;width:1px;height:18px;background:#e5e5e5"></div>
<div style="font-size:9.5px;font-weight:400;color:#000;letter-spacing:-0.300px;line-height:11px;white-space:nowrap;left:586.00px;top:79px;transform:scaleX(0.969);transform-origin:0 0;">Axe</div>
<div style="font-size:9.5px;font-weight:400;color:#000;letter-spacing:-0.300px;line-height:11px;white-space:nowrap;left:624.00px;top:79px;transform:scaleX(0.845);transform-origin:0 0;">BGD</div>
<div style="font-size:9.5px;font-weight:400;color:#000;letter-spacing:-0.300px;line-height:11px;white-space:nowrap;left:661.00px;top:79px;transform:scaleX(0.961);transform-origin:0 0;width:21.86px;overflow:hidden;">Color</div>
<div style="left:613px;top:93px;width:38px;height:15px;background:#000"></div>
<div style="left:652px;top:93px;width:30px;height:15px;background:#f0f000"></div>
<div style="font-size:12px;font-weight:400;color:#000;letter-spacing:-0.300px;line-height:14px;white-space:nowrap;left:577.20px;top:94px;transform:scaleX(0.909);transform-origin:0 0;">MSCO</div>
<div style="left:575px;top:109px;width:37px;height:15px;background:#f3f3f3"></div>
<div style="left:613px;top:109px;width:38px;height:15px;background:#000"></div>
<div style="left:652px;top:109px;width:30px;height:15px;background:#e00000"></div>
<div style="font-size:12px;font-weight:400;color:#000;letter-spacing:-0.300px;line-height:14px;white-space:nowrap;left:577.20px;top:110px;transform:scaleX(0.900);transform-origin:0 0;">LEHM</div>
<div style="left:613px;top:125px;width:38px;height:15px;background:#000"></div>
<div style="left:652px;top:125px;width:30px;height:15px;background:#00d000"></div>
<div style="font-size:12px;font-weight:400;color:#000;letter-spacing:-0.300px;line-height:14px;white-space:nowrap;left:577.20px;top:126px;transform:scaleX(0.865);transform-origin:0 0;">BRMS</div>
<div style="left:575px;top:141px;width:37px;height:15px;background:#f3f3f3"></div>
<div style="left:613px;top:141px;width:38px;height:15px;background:#000"></div>
<div style="left:652px;top:141px;width:30px;height:15px;background:#f080f0"></div>
<div style="font-size:12px;font-weight:400;color:#000;letter-spacing:-0.300px;line-height:14px;white-space:nowrap;left:577.20px;top:142px;transform:scaleX(0.925);transform-origin:0 0;">GETC</div>
<div style="left:613px;top:157px;width:38px;height:15px;background:#000"></div>
<div style="left:652px;top:157px;width:30px;height:15px;background:#00ffff"></div>
<div style="font-size:12px;font-weight:700;color:#000;letter-spacing:0.380px;line-height:14px;white-space:nowrap;left:577.20px;top:158px;">TIMB</div>
<div style="left:575px;top:157px;width:36px;height:15px;box-sizing:border-box;border:1px dotted #000"></div>
<div style="left:574px;top:347px;width:108px;height:15px;background:#f0f0f0"></div>
<div style="left:591px;top:347px;width:68px;height:15px;background:#cdcdcd"></div>
<svg style="left:0px;top:0px" width="781" height="563" viewBox="0 0 781 563"><path d="M584.6 351.4 L580.8 354.6 L584.6 357.8" stroke="#5f5f5f" stroke-width="1.9" fill="none"/></svg>
<svg style="left:0px;top:0px" width="781" height="563" viewBox="0 0 781 563"><path d="M671.2 351.4 L675 354.6 L671.2 357.8" stroke="#5f5f5f" stroke-width="1.9" fill="none"/></svg>
<div style="left:689px;top:73px;width:45px;height:1px;background:#dcdcdc"></div>
<div style="left:689px;top:362px;width:45px;height:1px;background:#dcdcdc"></div>
<div style="left:689px;top:73px;width:1px;height:290px;background:#dcdcdc"></div>
<div style="left:733px;top:73px;width:1px;height:290px;background:#dcdcdc"></div>
<div style="left:700px;top:131px;width:23px;height:1px;background:#0078d7"></div>
<div style="left:700px;top:151px;width:23px;height:1px;background:#0078d7"></div>
<div style="left:700px;top:131px;width:1px;height:21px;background:#0078d7"></div>
<div style="left:722px;top:131px;width:1px;height:21px;background:#0078d7"></div>
<div style="left:701px;top:132px;width:21px;height:1px;background:#0078d7"></div>
<div style="left:701px;top:150px;width:21px;height:1px;background:#0078d7"></div>
<div style="left:701px;top:132px;width:1px;height:19px;background:#0078d7"></div>
<div style="left:721px;top:132px;width:1px;height:19px;background:#0078d7"></div>
<div style="left:702px;top:133px;width:19px;height:17px;background:#e1e1e1"></div>
<div style="font-size:12px;font-weight:400;color:#000;letter-spacing:0.000px;line-height:14px;white-space:nowrap;left:708.00px;top:136px;">+</div>
<div style="left:700px;top:207px;width:23px;height:1px;background:#adadad"></div>
<div style="left:700px;top:227px;width:23px;height:1px;background:#adadad"></div>
<div style="left:700px;top:207px;width:1px;height:21px;background:#adadad"></div>
<div style="left:722px;top:207px;width:1px;height:21px;background:#adadad"></div>
<div style="left:701px;top:208px;width:21px;height:19px;background:#e1e1e1"></div>
<div style="font-size:12px;font-weight:400;color:#000;letter-spacing:0.000px;line-height:14px;white-space:nowrap;left:709.00px;top:211px;">-</div>
<div style="left:700px;top:283px;width:23px;height:1px;background:#adadad"></div>
<div style="left:700px;top:303px;width:23px;height:1px;background:#adadad"></div>
<div style="left:700px;top:283px;width:1px;height:21px;background:#adadad"></div>
<div style="left:722px;top:283px;width:1px;height:21px;background:#adadad"></div>
<div style="left:701px;top:284px;width:21px;height:19px;background:#e1e1e1"></div>
<div style="font-size:12px;font-weight:400;color:#000;letter-spacing:0.000px;line-height:14px;white-space:nowrap;left:707.00px;top:287px;">x</div>
<div style="left:53px;top:386px;width:291px;height:1px;background:#dcdcdc"></div>
<div style="left:53px;top:459px;width:291px;height:1px;background:#dcdcdc"></div>
<div style="left:53px;top:386px;width:1px;height:74px;background:#dcdcdc"></div>
<div style="left:343px;top:386px;width:1px;height:74px;background:#dcdcdc"></div>
<div style="left:61px;top:380px;width:71px;height:7px;background:#fff"></div>
<div style="font-size:11.5px;font-weight:400;color:#000;letter-spacing:-0.300px;line-height:12px;white-space:nowrap;left:61.80px;top:381px;transform:scaleX(0.980);transform-origin:0 0;">Other Options</div>
<div style="font-size:11.5px;font-weight:400;color:#000;letter-spacing:-0.300px;line-height:12px;white-space:nowrap;left:63.00px;top:416px;transform:scaleX(0.923);transform-origin:0 0;">Grid Line Color</div>
<div style="left:180px;top:410px;width:1px;height:20px;background:#a3a9b0"></div>
<div style="left:149px;top:429px;width:32px;height:1px;background:#a3a9b0"></div>
<div style="left:150px;top:411px;width:30px;height:18px;background:#d2691e"></div>
<div style="font-size:11.5px;font-weight:400;color:#000;letter-spacing:-0.300px;line-height:12px;white-space:nowrap;left:267.00px;top:396px;transform:scaleX(0.903);transform-origin:0 0;">Back</div>
<div style="font-size:11.5px;font-weight:400;color:#000;letter-spacing:0.168px;line-height:12px;white-space:nowrap;left:307.00px;top:396px;">Text</div>
<div style="font-size:11.5px;font-weight:400;color:#000;letter-spacing:-0.300px;line-height:12px;white-space:nowrap;left:208.40px;top:416px;transform:scaleX(0.951);transform-origin:0 0;">Header</div>
<div style="left:294px;top:410px;width:1px;height:20px;background:#a3a9b0"></div>
<div style="left:263px;top:429px;width:32px;height:1px;background:#a3a9b0"></div>
<div style="left:264px;top:411px;width:30px;height:18px;background:#d3d3d3"></div>
<div style="left:334px;top:410px;width:1px;height:20px;background:#a3a9b0"></div>
<div style="left:303px;top:429px;width:32px;height:1px;background:#a3a9b0"></div>
<div style="left:304px;top:411px;width:30px;height:18px;background:#000"></div>
<div style="font-size:11.5px;font-weight:400;color:#000;letter-spacing:-0.300px;line-height:12px;white-space:nowrap;left:183.80px;top:442px;transform:scaleX(0.947);transform-origin:0 0;">Background</div>
<div style="left:294px;top:436px;width:1px;height:20px;background:#a3a9b0"></div>
<div style="left:263px;top:455px;width:32px;height:1px;background:#a3a9b0"></div>
<div style="left:264px;top:437px;width:30px;height:18px;background:#808080"></div>
<div style="left:353px;top:386px;width:181px;height:1px;background:#dcdcdc"></div>
<div style="left:353px;top:459px;width:181px;height:1px;background:#dcdcdc"></div>
<div style="left:353px;top:386px;width:1px;height:74px;background:#dcdcdc"></div>
<div style="left:533px;top:386px;width:1px;height:74px;background:#dcdcdc"></div>
<div style="left:361px;top:380px;width:67px;height:7px;background:#fff"></div>
<div style="font-size:11.5px;font-weight:400;color:#000;letter-spacing:-0.300px;line-height:12px;white-space:nowrap;left:361.60px;top:381px;transform:scaleX(0.945);transform-origin:0 0;">Level1 Colors</div>
<div style="font-size:11.5px;font-weight:400;color:#000;letter-spacing:-0.300px;line-height:12px;white-space:nowrap;left:437.20px;top:396px;transform:scaleX(0.895);transform-origin:0 0;">Back</div>
<div style="font-size:11.5px;font-weight:400;color:#000;letter-spacing:0.035px;line-height:12px;white-space:nowrap;left:477.40px;top:396px;">Text</div>
<div style="font-size:11.5px;font-weight:400;color:#000;letter-spacing:-0.300px;line-height:12px;white-space:nowrap;left:362.40px;top:416px;transform:scaleX(0.914);transform-origin:0 0;">Up Tick</div>
<div style="font-size:11.5px;font-weight:400;color:#000;letter-spacing:-0.300px;line-height:12px;white-space:nowrap;left:362.40px;top:442px;transform:scaleX(0.937);transform-origin:0 0;">Down Tick</div>
<div style="left:464px;top:410px;width:1px;height:20px;background:#a3a9b0"></div>
<div style="left:433px;top:429px;width:32px;height:1px;background:#a3a9b0"></div>
<div style="left:434px;top:411px;width:30px;height:18px;background:#008000"></div>
<div style="left:504px;top:410px;width:1px;height:20px;background:#a3a9b0"></div>
<div style="left:473px;top:429px;width:32px;height:1px;background:#a3a9b0"></div>
<div style="left:474px;top:411px;width:30px;height:18px;background:#000"></div>
<div style="left:464px;top:436px;width:1px;height:20px;background:#a3a9b0"></div>
<div style="left:433px;top:455px;width:32px;height:1px;background:#a3a9b0"></div>
<div style="left:434px;top:437px;width:30px;height:18px;background:#ff0000"></div>
<div style="left:504px;top:436px;width:1px;height:20px;background:#a3a9b0"></div>
<div style="left:473px;top:455px;width:32px;height:1px;background:#a3a9b0"></div>
<div style="left:474px;top:437px;width:30px;height:18px;background:#000"></div>
<div style="left:543px;top:386px;width:201px;height:1px;background:#dcdcdc"></div>
<div style="left:543px;top:459px;width:201px;height:1px;background:#dcdcdc"></div>
<div style="left:543px;top:386px;width:1px;height:74px;background:#dcdcdc"></div>
<div style="left:743px;top:386px;width:1px;height:74px;background:#dcdcdc"></div>
<div style="left:551px;top:380px;width:89px;height:7px;background:#fff"></div>
<div style="font-size:11.5px;font-weight:400;color:#000;letter-spacing:-0.300px;line-height:12px;white-space:nowrap;left:552.00px;top:381px;transform:scaleX(0.975);transform-origin:0 0;">Order Highlighting</div>
<div style="left:553px;top:404px;width:13px;height:1px;background:#333"></div>
<div style="left:553px;top:416px;width:13px;height:1px;background:#333"></div>
<div style="left:553px;top:404px;width:1px;height:13px;background:#333"></div>
<div style="left:565px;top:404px;width:1px;height:13px;background:#333"></div>
<div style="font-size:11.5px;font-weight:400;color:#000;letter-spacing:-0.300px;line-height:12px;white-space:nowrap;left:570.30px;top:405px;transform:scaleX(0.983);transform-origin:0 0;">Highlight Accepted Orders</div>
<div style="font-size:11.5px;font-weight:400;color:#000;letter-spacing:-0.300px;line-height:12px;white-space:nowrap;left:627.20px;top:422.5px;transform:scaleX(0.899);transform-origin:0 0;">Back</div>
<div style="font-size:11.5px;font-weight:400;color:#000;letter-spacing:-0.032px;line-height:12px;white-space:nowrap;left:667.80px;top:422.5px;">Text</div>
<div style="font-size:11.5px;font-weight:400;color:#000;letter-spacing:-0.300px;line-height:12px;white-space:nowrap;left:552.80px;top:442px;transform:scaleX(0.964);transform-origin:0 0;">Order Color</div>
<div style="left:654px;top:436px;width:1px;height:20px;background:#a3a9b0"></div>
<div style="left:623px;top:455px;width:32px;height:1px;background:#a3a9b0"></div>
<div style="left:624px;top:437px;width:30px;height:18px;background:#000"></div>
<div style="left:694px;top:436px;width:1px;height:20px;background:#a3a9b0"></div>
<div style="left:663px;top:455px;width:32px;height:1px;background:#a3a9b0"></div>
<div style="left:664px;top:437px;width:30px;height:18px;background:#fff"></div>
<div style="left:31px;top:481px;width:731px;height:1px;background:#d5d5d5"></div>
<div style="left:31px;top:550px;width:731px;height:1px;background:#d5d5d5"></div>
<div style="left:31px;top:481px;width:1px;height:70px;background:#d5d5d5"></div>
<div style="left:761px;top:481px;width:1px;height:70px;background:#d5d5d5"></div>
<div style="left:372px;top:492px;width:114px;height:1px;background:#adadad"></div>
<div style="left:372px;top:512px;width:114px;height:1px;background:#adadad"></div>
<div style="left:372px;top:492px;width:1px;height:21px;background:#adadad"></div>
<div style="left:485px;top:492px;width:1px;height:21px;background:#adadad"></div>
<div style="left:373px;top:493px;width:112px;height:19px;background:#e1e1e1"></div>
<div style="font-size:11.5px;font-weight:400;color:#000;letter-spacing:-0.300px;line-height:12px;white-space:nowrap;left:397.00px;top:497px;transform:scaleX(0.982);transform-origin:0 0;">Load Default</div>
<div style="left:500px;top:492px;width:113px;height:1px;background:#adadad"></div>
<div style="left:500px;top:512px;width:113px;height:1px;background:#adadad"></div>
<div style="left:500px;top:492px;width:1px;height:21px;background:#adadad"></div>
<div style="left:612px;top:492px;width:1px;height:21px;background:#adadad"></div>
<div style="left:501px;top:493px;width:111px;height:19px;background:#e1e1e1"></div>
<div style="font-size:11.5px;font-weight:400;color:#000;letter-spacing:-0.300px;line-height:12px;white-space:nowrap;left:517.60px;top:497px;transform:scaleX(0.982);transform-origin:0 0;">Save as Default</div>
<div style="left:627px;top:492px;width:114px;height:1px;background:#adadad"></div>
<div style="left:627px;top:512px;width:114px;height:1px;background:#adadad"></div>
<div style="left:627px;top:492px;width:1px;height:21px;background:#adadad"></div>
<div style="left:740px;top:492px;width:1px;height:21px;background:#adadad"></div>
<div style="left:628px;top:493px;width:112px;height:19px;background:#e1e1e1"></div>
<div style="font-size:11.5px;font-weight:400;color:#000;letter-spacing:-0.300px;line-height:12px;white-space:nowrap;left:670.00px;top:497px;transform:scaleX(0.924);transform-origin:0 0;">Apply</div>
<div style="left:500px;top:527px;width:113px;height:1px;background:#adadad"></div>
<div style="left:500px;top:547px;width:113px;height:1px;background:#adadad"></div>
<div style="left:500px;top:527px;width:1px;height:21px;background:#adadad"></div>
<div style="left:612px;top:527px;width:1px;height:21px;background:#adadad"></div>
<div style="left:501px;top:528px;width:111px;height:19px;background:#e1e1e1"></div>
<div style="font-size:11.5px;font-weight:400;color:#000;letter-spacing:-0.300px;line-height:12px;white-space:nowrap;left:549.00px;top:532px;transform:scaleX(0.841);transform-origin:0 0;">OK</div>
<div style="left:627px;top:527px;width:114px;height:1px;background:#adadad"></div>
<div style="left:627px;top:547px;width:114px;height:1px;background:#adadad"></div>
<div style="left:627px;top:527px;width:1px;height:21px;background:#adadad"></div>
<div style="left:740px;top:527px;width:1px;height:21px;background:#adadad"></div>
<div style="left:628px;top:528px;width:112px;height:19px;background:#e1e1e1"></div>
<div style="font-size:11.5px;font-weight:400;color:#000;letter-spacing:-0.300px;line-height:12px;white-space:nowrap;left:667.40px;top:532px;transform:scaleX(0.937);transform-origin:0 0;">Cancel</div>
</body></html>
